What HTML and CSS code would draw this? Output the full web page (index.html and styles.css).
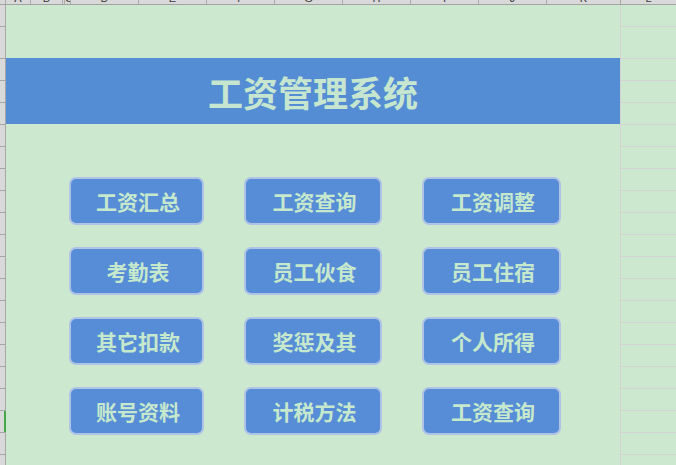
FILE: index.html
```html
<!DOCTYPE html>
<html lang="zh-CN">
<head>
<meta charset="utf-8">
<title>工资管理系统</title>
<link rel="stylesheet" href="styles.css">
</head>
<body>
<div class="sheet">
  <div class="colhead">
    <div class="ch corner"></div>
    <div class="ch w25"><span>A</span></div>
    <div class="ch w32"><span>B</span></div>
    <div class="ch w2"></div>
    <div class="ch w6"><span>C</span></div>
    <div class="ch w68"><span>D</span></div>
    <div class="ch w68"><span>E</span></div>
    <div class="ch w68"><span>F</span></div>
    <div class="ch w68"><span>G</span></div>
    <div class="ch w68"><span>H</span></div>
    <div class="ch w68"><span>I</span></div>
    <div class="ch w68"><span>J</span></div>
    <div class="ch w74"><span>K</span></div>
    <div class="ch rest"><span>L</span></div>
  </div>
  <div class="body">
    <div class="rowhead">
      <div class="rh r1"></div>
      <div class="rh r2"></div>
      <div class="rh"></div><div class="rh"></div><div class="rh"></div><div class="rh"></div>
      <div class="rh"></div><div class="rh"></div><div class="rh"></div><div class="rh"></div>
      <div class="rh"></div><div class="rh"></div><div class="rh"></div><div class="rh"></div>
      <div class="rh"></div><div class="rh"></div><div class="rh"></div><div class="rh"></div>
      <div class="rh sel"></div><div class="rh"></div><div class="rh"></div>
    </div>
    <div class="main">
      <div class="banner">工资管理系统</div>
      <div class="buttons">
        <div class="btn">工资汇总</div>
        <div class="btn">工资查询</div>
        <div class="btn">工资调整</div>
        <div class="btn">考勤表</div>
        <div class="btn">员工伙食</div>
        <div class="btn">员工住宿</div>
        <div class="btn">其它扣款</div>
        <div class="btn">奖惩及其</div>
        <div class="btn">个人所得</div>
        <div class="btn">账号资料</div>
        <div class="btn">计税方法</div>
        <div class="btn">工资查询</div>
      </div>
    </div>
    <div class="rightcol">
      <div class="rc r1"></div>
      <div class="rc r2"></div>
      <div class="rc"></div><div class="rc"></div><div class="rc"></div><div class="rc"></div>
      <div class="rc"></div><div class="rc"></div><div class="rc"></div><div class="rc"></div>
      <div class="rc"></div><div class="rc"></div><div class="rc"></div><div class="rc"></div>
      <div class="rc"></div><div class="rc"></div><div class="rc"></div><div class="rc"></div>
      <div class="rc"></div><div class="rc"></div><div class="rc"></div>
    </div>
  </div>
</div>
</body>
</html>
```
FILE: styles.css
```css
* { box-sizing: border-box; }
html, body {
  margin: 0;
  padding: 0;
  background: #cce8cf;
  width: 676px;
  height: 465px;
  overflow: hidden;
}
.sheet {
  width: 676px;
  height: 465px;
  display: flex;
  flex-direction: column;
}
.colhead {
  height: 5px;
  display: flex;
  background: #d9d9d9;
  border-bottom: 1px solid #a3a3a3;
  flex: none;
}
.ch {
  height: 4px;
  overflow: hidden;
  border-right: 1px solid #ababab;
  flex: none;
  font-family: "Liberation Sans", Arial, sans-serif;
  font-size: 11px;
  color: #3a3a3a;
  text-align: center;
}
.ch span {
  display: block;
  line-height: 12px;
  margin-top: -8px;
}
.corner { width: 6px; }
.w25 { width: 25px; }
.w32 { width: 32px; }
.w2 { width: 2px; }
.w6 { width: 6px; }
.w68 { width: 68px; }
.w74 { width: 74px; }
.rest { flex: 1; border-right: none; }

.body {
  flex: 1;
  display: flex;
  min-height: 0;
}
.rowhead {
  width: 6px;
  flex: none;
  background: #d9d9d9;
  display: flex;
  flex-direction: column;
}
.rh {
  height: 22px;
  flex: none;
  border-bottom: 1px solid #a6a6a6;
  box-shadow: inset -1px 0 0 #a6a6a6;
}
.rh.r1, .rc.r1 { height: 22px; }
.rh.r2, .rc.r2 { height: 32px; }
.rh.sel { box-shadow: inset -2px 0 0 #46a846; }

.main {
  width: 614px;
  flex: none;
  display: flex;
  flex-direction: column;
  padding-top: 53px;
}
.banner {
  height: 66px;
  background: #548dd4;
  display: flex;
  align-items: center;
  justify-content: center;
  font-family: "Noto Sans CJK SC", "Noto Sans", sans-serif;
  font-weight: 700;
  font-size: 35px;
  color: #c6e6cf;
}
.buttons {
  margin-top: 53px;
  padding-left: 63px;
  display: grid;
  grid-template-columns: 135px 138px 139px;
  grid-auto-rows: 48px;
  column-gap: 40px;
  row-gap: 22px;
}
.btn {
  background: #568dd6;
  border: 2px solid #afc3e7;
  border-radius: 7px;
  display: flex;
  align-items: center;
  justify-content: center;
  padding-left: 3px;
  font-family: "Noto Sans CJK SC", "Noto Sans", sans-serif;
  font-weight: 700;
  font-size: 21px;
  color: #c6e9cd;
}

.rightcol {
  flex: 1;
  border-left: 1px solid #d3d3d3;
  display: flex;
  flex-direction: column;
}
.rc {
  height: 22px;
  flex: none;
  border-bottom: 1px solid #d3d3d3;
}
```
